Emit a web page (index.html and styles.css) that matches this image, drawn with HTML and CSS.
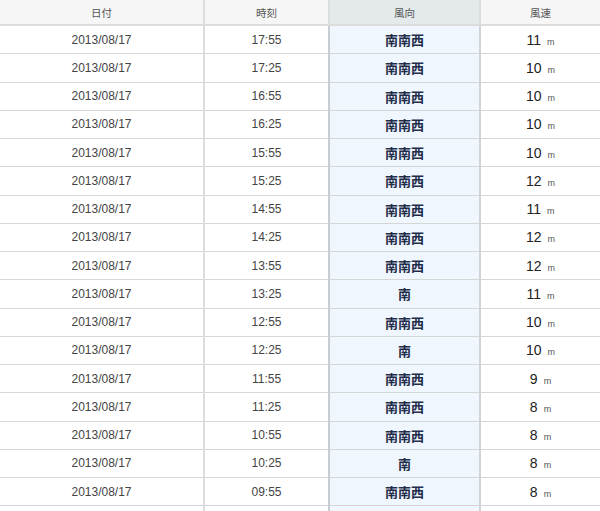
FILE: index.html
```html
<!DOCTYPE html>
<html lang="ja">
<head>
<meta charset="utf-8">
<link rel="stylesheet" href="styles.css">
</head>
<body>
<table class="wind">
  <colgroup>
    <col class="c-date"><col class="c-time"><col class="c-dir"><col class="c-speed">
  </colgroup>
  <thead>
    <tr><th>日付</th><th>時刻</th><th class="dir">風向</th><th>風速</th></tr>
  </thead>
  <tbody>
    <tr><td>2013/08/17</td><td>17:55</td><td class="dir">南南西</td><td class="spd">11<span class="u">m</span></td></tr>
    <tr><td>2013/08/17</td><td>17:25</td><td class="dir">南南西</td><td class="spd">10<span class="u">m</span></td></tr>
    <tr><td>2013/08/17</td><td>16:55</td><td class="dir">南南西</td><td class="spd">10<span class="u">m</span></td></tr>
    <tr><td>2013/08/17</td><td>16:25</td><td class="dir">南南西</td><td class="spd">10<span class="u">m</span></td></tr>
    <tr><td>2013/08/17</td><td>15:55</td><td class="dir">南南西</td><td class="spd">10<span class="u">m</span></td></tr>
    <tr><td>2013/08/17</td><td>15:25</td><td class="dir">南南西</td><td class="spd">12<span class="u">m</span></td></tr>
    <tr><td>2013/08/17</td><td>14:55</td><td class="dir">南南西</td><td class="spd">11<span class="u">m</span></td></tr>
    <tr><td>2013/08/17</td><td>14:25</td><td class="dir">南南西</td><td class="spd">12<span class="u">m</span></td></tr>
    <tr><td>2013/08/17</td><td>13:55</td><td class="dir">南南西</td><td class="spd">12<span class="u">m</span></td></tr>
    <tr><td>2013/08/17</td><td>13:25</td><td class="dir">南</td><td class="spd">11<span class="u">m</span></td></tr>
    <tr><td>2013/08/17</td><td>12:55</td><td class="dir">南南西</td><td class="spd">10<span class="u">m</span></td></tr>
    <tr><td>2013/08/17</td><td>12:25</td><td class="dir">南</td><td class="spd">10<span class="u">m</span></td></tr>
    <tr><td>2013/08/17</td><td>11:55</td><td class="dir">南南西</td><td class="spd">9<span class="u">m</span></td></tr>
    <tr><td>2013/08/17</td><td>11:25</td><td class="dir">南南西</td><td class="spd">8<span class="u">m</span></td></tr>
    <tr><td>2013/08/17</td><td>10:55</td><td class="dir">南南西</td><td class="spd">8<span class="u">m</span></td></tr>
    <tr><td>2013/08/17</td><td>10:25</td><td class="dir">南</td><td class="spd">8<span class="u">m</span></td></tr>
    <tr><td>2013/08/17</td><td>09:55</td><td class="dir">南南西</td><td class="spd">8<span class="u">m</span></td></tr>
    <tr class="tail"><td></td><td></td><td class="dir"></td><td class="spd"></td></tr>
  </tbody>
</table>
</body>
</html>
```
FILE: styles.css
```css
html, body {
  margin: 0;
  padding: 0;
  background: #ffffff;
  overflow: hidden;
}

.wind {
  width: 600px;
  table-layout: fixed;
  border-collapse: collapse;
  font-family: "Liberation Sans", "Noto Sans CJK JP", sans-serif;
  color: #444;
}

.c-date { width: 204px; }
.c-time { width: 125px; }
.c-dir { width: 151px; }
.c-speed { width: 120px; }

.wind th {
  height: 24px;
  padding: 0;
  background: #f6f6f6;
  font-weight: normal;
  font-size: 10.5px;
  color: #555;
  font-family: "Noto Sans CJK JP", sans-serif;
  border-bottom: 2px solid #dcdcdc;
  border-left: 2px solid #d9dde0;
}

.wind th.dir {
  background: #e4eaec;
}

.wind td {
  height: 27.25px;
  padding: 0;
  text-align: center;
  font-size: 12px;
  border-bottom: 1px solid #d6d6d6;
  border-left: 2px solid #d9dde0;
}

.wind th:first-child,
.wind td:first-child {
  border-left: none;
}

.wind td.dir {
  background: #f0f6fd;
  font-family: "Noto Sans CJK JP", sans-serif;
  font-weight: bold;
  font-size: 13px;
  color: #1f2d4a;
  border-left-color: #c9cdd1;
}

.wind td.spd {
  font-size: 14px;
  color: #222;
  border-left-color: #d0d4d8;
}

.u {
  font-size: 9px;
  color: #555;
  margin-left: 6px;
}
```
